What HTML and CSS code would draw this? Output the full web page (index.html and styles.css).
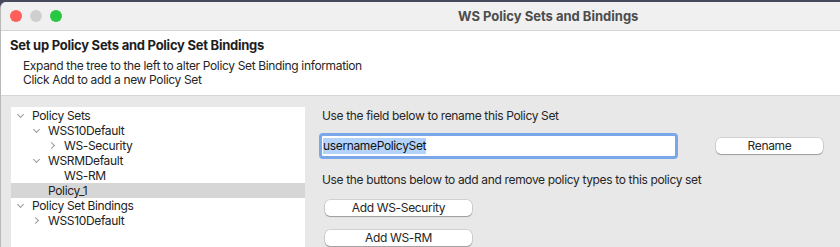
FILE: index.html
```html
<!DOCTYPE html>
<html lang="en">
<head>
    <meta charset="UTF-8">
    <title>WS Policy Sets and Bindings</title>
    <link rel="stylesheet" href="styles.css">
</head>
<body>
    <div class="window">
        <div class="titlebar">
            <div class="lights">
                <span class="light red"></span>
                <span class="light gray"></span>
                <span class="light green"></span>
            </div>
            <div class="title">WS Policy Sets and Bindings</div>
        </div>

        <div class="header">
            <h1>Set up Policy Sets and Policy Set Bindings</h1>
            <p>Expand the tree to the left to alter Policy Set Binding information</p>
            <p>Click Add to add a new Policy Set</p>
        </div>

        <div class="content">
            <ul class="tree">
                <li class="row lvl0"><span class="twisty open"></span>Policy Sets</li>
                <li class="row lvl1"><span class="twisty open"></span>WSS10Default</li>
                <li class="row lvl2"><span class="twisty closed"></span>WS-Security</li>
                <li class="row lvl1"><span class="twisty open"></span>WSRMDefault</li>
                <li class="row lvl2"><span class="twisty"></span>WS-RM</li>
                <li class="row lvl1 selected"><span class="twisty"></span>Policy_1</li>
                <li class="row lvl0"><span class="twisty open"></span>Policy Set Bindings</li>
                <li class="row lvl1"><span class="twisty closed"></span>WSS10Default</li>
            </ul>

            <div class="details">
                <p class="hint">Use the field below to rename this Policy Set</p>
                <div class="rename-row">
                    <div class="field"><span class="sel">usernamePolicySet</span></div>
                    <button class="btn rename">Rename</button>
                </div>
                <p class="hint">Use the buttons below to add and remove policy types to this policy set</p>
                <button class="btn add">Add WS-Security</button>
                <button class="btn add">Add WS-RM</button>
            </div>
        </div>
    </div>
</body>
</html>
```

FILE: styles.css
```css
html, body {
    height: 247px;
}

body {
    margin: 0;
    background-color: #464a5c;
    font-family: Inter, "Noto Sans", sans-serif;
    font-size: 12px;
    letter-spacing: -0.35px;
    color: #262626;
    overflow: hidden;
}

.window {
    margin-top: 2px;
    background-color: #e8e8e8;
    border-top-left-radius: 6px;
    border-left: 1px solid #b8b8b8;
    height: 245px;
    overflow: hidden;
}

.titlebar {
    height: 28px;
    background-color: #f0f0f0;
    border-bottom: 1px solid #d4d4d4;
    display: flex;
    align-items: center;
}

.lights {
    display: flex;
    gap: 8px;
    padding-left: 9px;
}

.light {
    width: 12px;
    height: 12px;
    border-radius: 50%;
}

.light.red { background-color: #fe5f57; }
.light.gray { background-color: #cfcfcf; }
.light.green { background-color: #28c840; }

.title {
    margin-left: 396px;
    font-size: 13px;
    font-weight: bold;
    letter-spacing: 0;
    color: #4c4c4c;
}

.header {
    background-color: #fff;
    height: 65px;
    border-bottom: 1px solid #d6d6d6;
    padding: 6px 0 0 9px;
    box-sizing: border-box;
}

.header h1 {
    margin: 0 0 6px;
    font-size: 13px;
    font-weight: bold;
    letter-spacing: -0.25px;
    color: #1e1e1e;
}

.header p {
    margin: 0 0 0 13px;
    line-height: 14px;
}

.content {
    display: flex;
    padding: 11px 0 0 10px;
}

.tree {
    list-style: none;
    margin: 0;
    padding: 1px 0 0;
    width: 294px;
    height: 150px;
    background-color: #fff;
    flex-shrink: 0;
}

.row {
    height: 15px;
    line-height: 15px;
    display: flex;
    align-items: center;
    color: #222;
}

.row.lvl0 { padding-left: 5px; }
.row.lvl1 { padding-left: 21px; }
.row.lvl2 { padding-left: 37px; }

.row.selected {
    background-color: #d6d6d6;
}

.twisty {
    width: 16px;
    height: 15px;
    flex-shrink: 0;
    position: relative;
}

.twisty.open::before,
.twisty.closed::before {
    content: "";
    position: absolute;
    width: 4px;
    height: 4px;
    border-right: 1px solid #9a9a9a;
    border-bottom: 1px solid #9a9a9a;
}

.twisty.open::before {
    left: 2px;
    top: 4px;
    transform: rotate(45deg);
}

.twisty.closed::before {
    left: 1px;
    top: 5px;
    transform: rotate(-45deg);
}

.details {
    padding-left: 17px;
}

.hint {
    margin: 1px 0 0;
    line-height: 15px;
}

.rename-row {
    display: flex;
    align-items: center;
    margin: 10px 0 13px -3px;
}

.field {
    width: 352px;
    height: 20px;
    background-color: #fff;
    border: 3px solid #7aa7ea;
    border-radius: 4px;
    display: flex;
    align-items: center;
    padding-left: 1px;
}

.sel {
    background-color: #b4d3fb;
    color: #111;
    font-size: 12px;
    line-height: 16px;
}

.btn {
    display: block;
    font-family: inherit;
    font-size: 12px;
    letter-spacing: -0.35px;
    color: #262626;
    background-color: #fff;
    border: none;
    border-radius: 5px;
    box-shadow: 0 0 0 0.5px rgba(0, 0, 0, 0.2), 0 1px 1px rgba(0, 0, 0, 0.25);
    height: 16px;
    padding: 0;
    line-height: 16px;
}

.btn.rename {
    width: 107px;
    margin-left: 38px;
}

.btn.add {
    width: 147px;
    margin: 0 0 14px 3px;
}

.details .hint + .btn.add {
    margin-top: 13px;
}
```
